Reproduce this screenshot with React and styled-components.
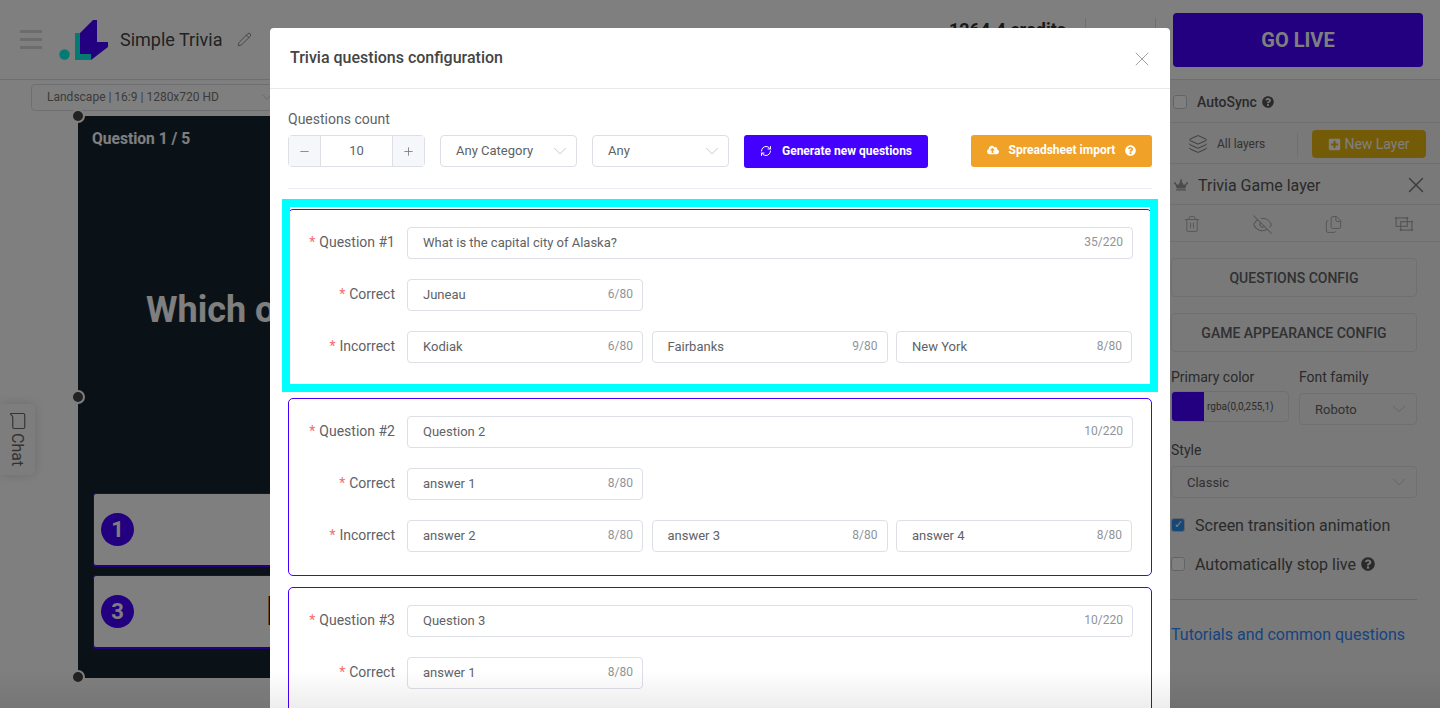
import React from 'react'
import styled, { createGlobalStyle } from 'styled-components'
import { ChevronDown, EyeOff, Files, Layers, MessageSquare, Minus, Pencil, Plus, RefreshCw, Trash2, Users, X } from 'lucide-react'
import { FaCloudUploadAlt, FaCrown, FaPlusSquare, FaQuestionCircle } from 'react-icons/fa'

const Global = createGlobalStyle`
  * { box-sizing: border-box; }
  html, body { margin: 0; height: 100%; background: #fff; }
  body { font-family: Roboto, "Liberation Sans", sans-serif; color: #606266; overflow: hidden; }
`

const Page = styled.div`
  height: 100vh;
  display: flex;
  flex-direction: column;
  overflow: hidden;
`

const Header = styled.header`
  height: 80px;
  flex: none;
  display: flex;
  align-items: center;
  padding: 0 17px 0 20px;
  border-bottom: 1px solid #dedede;
`

const Burger = styled.div`
  width: 22px;
  height: 19px;
  margin-right: 17px;
  display: flex;
  flex-direction: column;
  justify-content: space-between;
  & > i { display: block; height: 3px; background: #d8d8d8; }
`

const Title = styled.span`
  font-size: 18px;
  color: #444;
  margin: 0 15px 0 12px;
`

const Credits = styled.div`
  margin-left: auto;
  margin-right: 19px;
  margin-bottom: 20px;
  font-size: 18px;
  font-weight: 700;
  color: #333;
`

const HeaderCell = styled.div`
  width: 71px;
  height: 43px;
  display: flex;
  justify-content: center;
  padding-top: 9px;
  color: #666;
  border-left: 1px solid #dedede;
  border-right: 1px solid #dedede;
  margin-right: 17px;
`

const GoLive = styled.button`
  width: 250px;
  height: 54px;
  border: 0;
  border-radius: 4px;
  background: #4400ff;
  color: #fff;
  font: 700 20px Roboto, sans-serif;
`

const Main = styled.main`
  flex: 1;
  display: flex;
  min-height: 0;
`

const Workspace = styled.section`
  width: 1170px;
  flex: none;
  padding: 4px 0 0 31px;
  position: relative;
`

const SizeSelect = styled.div`
  width: 250px;
  height: 27px;
  border: 1px solid #dcdfe6;
  border-radius: 4px;
  padding: 0 4px 2px 15px;
  display: flex;
  align-items: center;
  justify-content: space-between;
  font-size: 12px;
  color: #777;
  svg { color: #c0c4cc; }
`

const Stage = styled.div`
  position: relative;
  width: 999px;
  height: 562px;
  margin: 5px 0 0 47px;
  padding: 14px 15px 30px;
  background: #16242f;
  display: flex;
  flex-direction: column;
`

const Handle = styled.span`
  position: absolute;
  left: -7px;
  top: ${props => props.$top}px;
  width: 14px;
  height: 14px;
  border-radius: 50%;
  border: 2px solid #fff;
  background: #444;
`

const Counter = styled.div`
  margin-left: -1px;
  font-size: 15.6px;
  font-weight: 700;
  color: #fff;
`

const QuestionText = styled.div`
  margin: 141px 0 0 53px;
  font-size: 36px;
  line-height: 42px;
  font-weight: 700;
  color: #fff;
  white-space: nowrap;
`

const Answers = styled.div`
  margin-top: auto;
  display: grid;
  grid-template-columns: 1fr 1fr;
  gap: 9px;
`

const Answer = styled.div`
  height: 73px;
  background: #fff;
  border: 1px solid #4400ff;
  border-radius: 3px;
  box-shadow: 0 1px 0 #4400ff;
  display: flex;
  align-items: center;
  padding-left: 7px;
`

const Badge = styled.span`
  width: 33px;
  height: 33px;
  flex: none;
  border-radius: 50%;
  background: #4400ff;
  color: #fff;
  font-size: 22px;
  font-weight: 700;
  display: flex;
  align-items: center;
  justify-content: center;
`

const AnswerText = styled.span`
  flex: 1;
  padding-left: 2px;
  text-align: center;
  font-size: 40px;
  font-weight: 700;
  color: #222;
`

const ChatTab = styled.div`
  position: absolute;
  left: 0;
  top: 324px;
  width: 35px;
  height: 71px;
  padding-top: 8px;
  background: #fafafa;
  border-radius: 0 5px 5px 0;
  box-shadow: 0 0 12px rgba(0, 0, 0, 0.15);
  display: flex;
  flex-direction: row;
  align-items: center;
  gap: 3px;
  font-size: 16px;
  color: #666;
  writing-mode: vertical-rl;
  svg { transform: rotate(90deg); }
`

const Panel = styled.aside`
  width: 270px;
  flex: none;
  padding-left: 1px;
  background: #f2f2f2;
`

const PanelRow = styled.div`
  height: ${props => props.$h}px;
  margin-left: -1px;
  padding: 2px ${props => props.$pr || 0}px 0 ${props => props.$pl || 0}px;
  display: flex;
  align-items: center;
  border-bottom: 1px solid #dedede;
`

const Check = styled.span`
  width: 14px;
  height: 14px;
  flex: none;
  border-radius: 3px;
  border: 1px solid #c9c9c9;
  background: ${props => (props.$on ? '#2a90f0' : '#fff')};
  color: #fff;
  font-size: 11px;
  line-height: 12px;
  text-align: center;
`

const AutoSync = styled.span`
  margin: 0 5px 0 10px;
  font-size: 14px;
  font-weight: 500;
  color: #555;
`

const Help = styled(FaQuestionCircle)`
  color: #555;
  font-size: ${props => props.$size || 12}px;
  margin-left: ${props => props.$ml || 0}px;
`

const AllLayers = styled.span`
  margin-left: 9px;
  width: 80px;
  font-size: 12px;
  color: #666;
`

const VSep = styled.span`
  width: 1px;
  height: 25px;
  background: #dedede;
  margin-right: 14px;
`

const NewLayer = styled.button`
  width: 114px;
  height: 28px;
  border: 0;
  border-radius: 4px;
  background: #e8b60e;
  color: #fff;
  font: 400 14px Roboto, sans-serif;
  display: flex;
  align-items: center;
  justify-content: center;
  gap: 3px;
`

const LayerName = styled.span`
  flex: 1;
  margin-left: 10px;
  font-size: 16px;
  color: #555;
`

const IconRow = styled(PanelRow)`
  justify-content: space-between;
  color: #aaa;
`

const IconCell = styled.span`
  width: 24px;
  display: flex;
  justify-content: center;
`

const PanelBody = styled.div`
  padding: 16px 23px 0 0;
  display: flex;
  flex-direction: column;
`

const ConfigButton = styled.button`
  height: 39px;
  margin-bottom: 16px;
  background: transparent;
  border: 1px solid #dcdfe6;
  border-radius: 4px;
  color: #606266;
  font: 500 14px Roboto, sans-serif;
`

const FieldGrid = styled.div`
  display: grid;
  grid-template-columns: 118px 118px;
  column-gap: 10px;
  margin-top: 1px;
  margin-bottom: 17px;
`

const FieldLabel = styled.div`
  font-size: 14px;
  color: #555;
  margin-bottom: ${props => props.$mb ?? 6}px;
`

const Picker = styled.div`
  height: 31px;
  display: flex;
  align-items: center;
  border: 1px solid #dcdfe6;
  border-radius: 4px;
  font-size: 10px;
  color: #555;
`

const Swatch = styled.span`
  width: 32px;
  height: 100%;
  margin: 0 3px 0 0;
  background: #4400ff;
  border-radius: 3px 0 0 3px;
`

const PanelSelect = styled.div`
  height: 32px;
  padding: 0 6px 0 15px;
  display: flex;
  align-items: center;
  justify-content: space-between;
  border: 1px solid #dcdfe6;
  border-radius: 4px;
  font-size: 13px;
  color: #606266;
  svg { color: #c0c4cc; }
`

const CheckRow = styled.div`
  display: flex;
  align-items: center;
  gap: 10px;
  height: 20px;
  font-size: 16px;
  color: #555;
  margin-top: ${props => props.$mt}px;
`

const Rule = styled.div`
  height: 1px;
  margin-top: 25px;
  background: #d0d0d0;
`

const TutorialLink = styled.a`
  margin-top: 25px;
  font-size: 16px;
  color: #2f88ff;
`

const Overlay = styled.div`
  position: fixed;
  inset: 0;
  background: rgba(0, 0, 0, 0.5);
  overflow: hidden;
  display: flex;
  justify-content: center;
  align-items: flex-start;
  &::after {
    content: '';
    position: absolute;
    left: 0;
    right: 0;
    bottom: 0;
    height: 38px;
    background: linear-gradient(rgba(0, 0, 0, 0), rgba(0, 0, 0, 0.07));
  }
`

const Modal = styled.div`
  width: 900px;
  flex: none;
  margin-top: 28px;
  background: #fff;
  border-radius: 4px;
`

const ModalHead = styled.div`
  height: 61px;
  padding: 0 20px 2px;
  display: flex;
  align-items: center;
  justify-content: space-between;
  border-bottom: 1px solid #e8e8e8;
`

const ModalTitle = styled.h2`
  margin: 0;
  font-size: 16px;
  font-weight: 500;
  color: #444;
`

const CloseIcon = styled(X)`
  color: #a0a3a9;
  margin: 4px -4px 0 0;
`

const ModalBody = styled.div`
  padding: 22px 18px 0;
`

const CountLabel = styled.div`
  font-size: 14px;
  line-height: 16px;
  margin-bottom: 8px;
`

const Toolbar = styled.div`
  display: flex;
  align-items: flex-start;
  gap: 15px;
  padding-bottom: 20px;
  border-bottom: 1px solid #ebeef5;
  margin-bottom: 20px;
`

const Stepper = styled.div`
  width: 137px;
  height: 32px;
  border: 1px solid #dcdfe6;
  border-radius: 4px;
  display: flex;
  align-items: center;
  font-size: 13px;
`

const StepButton = styled.span`
  width: 32px;
  height: 100%;
  background: #f5f7fa;
  color: #606266;
  display: flex;
  align-items: center;
  justify-content: center;
  border-${props => props.$side}: 1px solid #dcdfe6;
`

const StepValue = styled.span`
  flex: 1;
  text-align: center;
  padding-bottom: 2px;
`

const ToolSelect = styled.div`
  width: 137px;
  height: 32px;
  padding: 0 5px 2px 15px;
  border: 1px solid #dcdfe6;
  border-radius: 4px;
  display: flex;
  align-items: center;
  justify-content: space-between;
  font-size: 13px;
  svg { color: #c0c4cc; margin-top: 2px; }
`

const ActionButton = styled.button`
  width: ${props => props.$w}px;
  height: ${props => props.$h}px;
  margin-left: ${props => props.$ml || 0};
  padding: 0 0 2px;
  border: 0;
  border-radius: 3px;
  background: ${props => props.$bg};
  color: #fff;
  font: 700 12px Roboto, sans-serif;
  display: flex;
  align-items: center;
  justify-content: center;
  gap: 10px;
`

const QuestionCard = styled.div`
  position: relative;
  height: 178px;
  margin-bottom: 11px;
  padding: 17px 18px 0 0;
  border: 1px solid #4400ff;
  border-radius: 5px;
  display: grid;
  grid-template-columns: 106px 1fr;
  column-gap: 12px;
  row-gap: 20px;
  align-content: start;
  ${props => props.$highlight && `
    &::after {
      content: '';
      position: absolute;
      inset: -11px -7px -6px -7px;
      border: 8px solid #00ffff;
      pointer-events: none;
    }
  `}
`

const RowLabel = styled.label`
  height: 32px;
  padding-bottom: 2px;
  display: flex;
  align-items: center;
  justify-content: flex-end;
  font-size: 14px;
  color: #606266;
  &::before {
    content: '*';
    color: #f56c6c;
    margin-right: 4px;
  }
`

const Inputs = styled.div`
  display: grid;
  grid-template-columns: repeat(3, 236px);
  column-gap: 8.5px;
`

const Field = styled.div`
  grid-column: ${props => (props.$wide ? '1 / -1' : 'auto')};
  height: 32px;
  margin-right: ${props => (props.$wide ? '-1px' : '0')};
  padding: 0 9px 2px 15px;
  border: 1px solid #dcdfe6;
  border-radius: 4px;
  display: flex;
  align-items: center;
  justify-content: space-between;
  font-size: 13px;
  color: #606266;
`

const Count = styled.span`
  font-size: 12px;
  color: #909399;
`

const ResizeIcon = () => (
  <svg width="18" height="14" viewBox="0 0 19 15" fill="none" stroke="currentColor" strokeWidth="1.2">
    <rect x="1" y="1" width="12" height="9" />
    <rect x="6" y="5" width="12" height="9" />
    <path d="M0 0h2v2H0zM12 0h2v2h-2zM17 4h2v2h-2zM17 13h2v2h-2zM5 13h2v2H5z" fill="currentColor" stroke="none" />
  </svg>
)

const Logo = () => (
  <svg width="49" height="40" viewBox="59 20 49 40">
    <circle cx="64.5" cy="54.5" r="5.2" fill="#08f5e6" />
    <path d="M75 33h5v21h11v6H75z" fill="#08f5e6" />
    <path d="M80 33 93 20h4v22h11v5L91 60v-6H80z" fill="#4400ff" />
  </svg>
)

const questions = [
  { label: 'Question #1', text: 'What is the capital city of Alaska?', correct: 'Juneau', wrong: ['Kodiak', 'Fairbanks', 'New York'] },
  { label: 'Question #2', text: 'Question 2', correct: 'answer 1', wrong: ['answer 2', 'answer 3', 'answer 4'] },
  { label: 'Question #3', text: 'Question 3', correct: 'answer 1', wrong: ['answer 2', 'answer 3', 'answer 4'] },
]

const InputField = ({ value, max, wide }) => (
  <Field $wide={wide}>
    {value}
    <Count>{value.length}/{max}</Count>
  </Field>
)

const Question = ({ q, highlight }) => (
  <QuestionCard $highlight={highlight}>
    <RowLabel>{q.label}</RowLabel>
    <Inputs><InputField value={q.text} max={220} wide /></Inputs>
    <RowLabel>Correct</RowLabel>
    <Inputs><InputField value={q.correct} max={80} /></Inputs>
    <RowLabel>Incorrect</RowLabel>
    <Inputs>
      {q.wrong.map(w => <InputField key={w} value={w} max={80} />)}
    </Inputs>
  </QuestionCard>
)

export default function App() {
  return (
    <Page>
      <Global />
      <Header>
        <Burger><i /><i /><i /></Burger>
        <Logo />
        <Title>Simple Trivia</Title>
        <Pencil size={15} color="#888" strokeWidth={1.5} />
        <Credits>1264.4 credits</Credits>
        <HeaderCell><Users size={20} /></HeaderCell>
        <GoLive>GO LIVE</GoLive>
      </Header>
      <Main>
        <Workspace>
          <SizeSelect>Landscape | 16:9 | 1280x720 HD <ChevronDown size={18} strokeWidth={1} /></SizeSelect>
          <Stage>
            <Handle $top={-7} />
            <Handle $top={274} />
            <Handle $top={554} />
            <Counter>Question 1 / 5</Counter>
            <QuestionText>Which of these is the capital of Alaska?</QuestionText>
            <Answers>
              <Answer><Badge>1</Badge><AnswerText>Juneau</AnswerText></Answer>
              <Answer><Badge>2</Badge><AnswerText>Kodiak</AnswerText></Answer>
              <Answer><Badge>3</Badge><AnswerText>Fairbanks</AnswerText></Answer>
              <Answer><Badge>4</Badge><AnswerText>New York</AnswerText></Answer>
            </Answers>
          </Stage>
          <ChatTab><MessageSquare size={18} strokeWidth={1.5} />Chat</ChatTab>
        </Workspace>
        <Panel>
          <PanelRow $h={43} $pl={3}>
            <Check />
            <AutoSync>AutoSync</AutoSync>
            <Help />
          </PanelRow>
          <PanelRow $h={41} $pl={18}>
            <Layers size={20} color="#777" strokeWidth={1.2} />
            <AllLayers>All layers</AllLayers>
            <VSep />
            <NewLayer><FaPlusSquare size={13} />New Layer</NewLayer>
          </PanelRow>
          <PanelRow $h={41} $pl={4} $pr={11}>
            <FaCrown size={14} color="#999" />
            <LayerName>Trivia Game layer</LayerName>
            <X size={26} color="#777" strokeWidth={1.3} />
          </PanelRow>
          <IconRow $h={37} $pl={10} $pr={24}>
            <IconCell><Trash2 size={18} strokeWidth={1.2} /></IconCell>
            <IconCell><EyeOff size={21} strokeWidth={1.2} /></IconCell>
            <IconCell><Files size={19} strokeWidth={1.2} /></IconCell>
            <IconCell><ResizeIcon /></IconCell>
          </IconRow>
          <PanelBody>
            <ConfigButton>QUESTIONS CONFIG</ConfigButton>
            <ConfigButton>GAME APPEARANCE CONFIG</ConfigButton>
            <FieldGrid>
              <div>
                <FieldLabel $mb={6}>Primary color</FieldLabel>
                <Picker><Swatch />rgba(0,0,255,1)</Picker>
              </div>
              <div>
                <FieldLabel $mb={8}>Font family</FieldLabel>
                <PanelSelect>Roboto <ChevronDown size={22} strokeWidth={1} /></PanelSelect>
              </div>
            </FieldGrid>
            <FieldLabel $mb={8}>Style</FieldLabel>
            <PanelSelect>Classic <ChevronDown size={22} strokeWidth={1} /></PanelSelect>
            <CheckRow $mt={17}><Check $on>✓</Check>Screen transition animation</CheckRow>
            <CheckRow $mt={19}><Check />Automatically stop live <Help $size={14} $ml={-5} /></CheckRow>
            <Rule />
            <TutorialLink>Tutorials and common questions</TutorialLink>
          </PanelBody>
        </Panel>
      </Main>
      <Overlay>
        <Modal>
          <ModalHead>
            <ModalTitle>Trivia questions configuration</ModalTitle>
            <CloseIcon size={24} strokeWidth={1} />
          </ModalHead>
          <ModalBody>
            <CountLabel>Questions count</CountLabel>
            <Toolbar>
              <Stepper>
                <StepButton $side="right"><Minus size={13} strokeWidth={1.3} /></StepButton>
                <StepValue>10</StepValue>
                <StepButton $side="left"><Plus size={13} strokeWidth={1.3} /></StepButton>
              </Stepper>
              <ToolSelect>Any Category <ChevronDown size={22} strokeWidth={1} /></ToolSelect>
              <ToolSelect>Any <ChevronDown size={22} strokeWidth={1} /></ToolSelect>
              <ActionButton $w={184} $h={33} $bg="#4400ff"><RefreshCw size={12} strokeWidth={2} />Generate new questions</ActionButton>
              <ActionButton $w={181} $h={32} $ml="28px" $bg="#f0a128"><FaCloudUploadAlt size={12} />Spreadsheet import<FaQuestionCircle size={11} /></ActionButton>
            </Toolbar>
            {questions.map((q, i) => <Question key={q.label} q={q} highlight={i === 0} />)}
          </ModalBody>
        </Modal>
      </Overlay>
    </Page>
  )
}
